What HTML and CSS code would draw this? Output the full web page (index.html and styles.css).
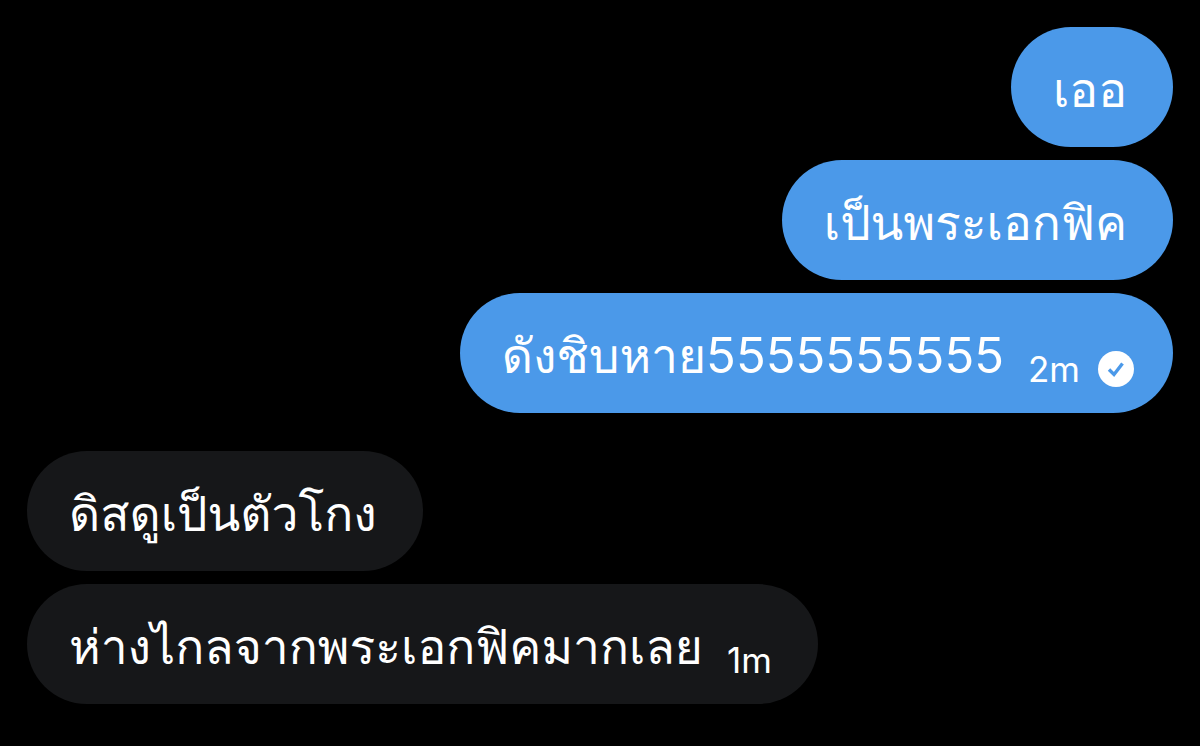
FILE: index.html
```html
<!DOCTYPE html>
<html lang="th">
<head>
<meta charset="utf-8">
<meta name="viewport" content="width=device-width, initial-scale=1">
<title>Chat</title>
<link rel="stylesheet" href="styles.css">
</head>
<body>
<main class="chat">
  <section class="group sent">
    <div class="bubble"><p class="text">เออ</p></div>
    <div class="bubble"><p class="text">เป็นพระเอกฟิค</p></div>
    <div class="bubble with-status">
      <p class="text">ดังชิบหาย<span class="digits">5555555555</span></p>
      <time class="time">2m</time>
      <svg class="check" viewBox="0 0 36 36" role="img" aria-label="Sent"><circle cx="18" cy="18" r="18" fill="#fff"/><path d="M11 18.5l5 5 8.5-11" fill="none" stroke="#4b99e9" stroke-width="3.4"/></svg>
    </div>
  </section>
  <section class="group received">
    <div class="bubble"><p class="text">ดิสดูเป็นตัวโกง</p></div>
    <div class="bubble">
      <p class="text">ห่างไกลจากพระเอกฟิคมากเลย</p>
      <time class="time">1m</time>
    </div>
  </section>
</main>
</body>
</html>
```
FILE: styles.css
```css
* { box-sizing: border-box; }
body { margin: 0; background: #000; color: #fff; font-family: Inter, Loma, "Noto Sans Thai Looped", sans-serif; }
.chat { display: flex; flex-direction: column; gap: 38px; padding: 27px; }
.group { display: flex; flex-direction: column; gap: 13px; }
.sent { align-items: flex-end; }
.received { align-items: flex-start; }
.bubble { display: flex; align-items: center; min-height: 120px; padding: 6px 46px 0 42px; border-radius: 60px; background: #161719; white-space: nowrap; }
.sent .bubble { background: #4b99e9; }
.sent .with-status { padding-right: 39px; }
.text { margin: 0; font-size: 48px; line-height: 72px; }
.digits { font-size: 49px; }
.time { margin: 26px 0 0 24px; font-size: 35px; line-height: 40px; }
.check { width: 36px; height: 36px; margin: 26px 0 0 18px; }
```
